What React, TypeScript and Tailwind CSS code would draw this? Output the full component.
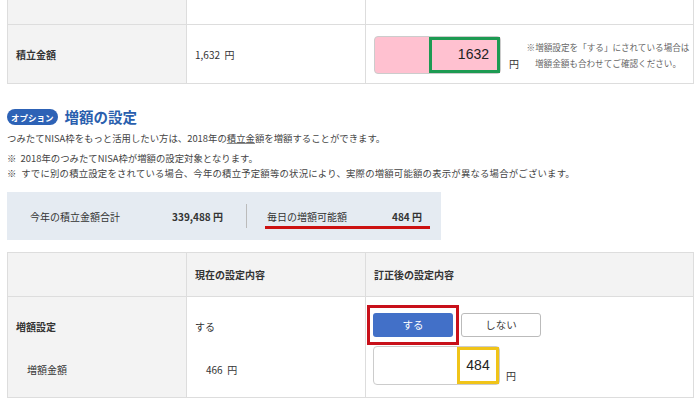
import React from "react"

const font = "font-['Noto_Sans_CJK_JP','Noto_Sans',sans-serif]"

function Cell({ className = "", children }: { className?: string; children?: React.ReactNode }) {
  return <div className={`flex items-center ${className}`}>{children}</div>
}

export default function App() {
  return (
    <div className={`w-[700px] h-[420px] overflow-hidden bg-white text-[#333] ${font}`}>
      <div className="ml-[7px] w-[687px]">
        {/* 上部テーブル（積立金額） */}
        <div className="grid grid-cols-[179px_179px_1fr] border-x border-b border-[#ddd] text-[10px]">
          <Cell className="h-[25px] bg-[#f3f3f3] border-r border-b border-[#ddd]" />
          <Cell className="h-[25px] border-r border-b border-[#ddd]" />
          <Cell className="h-[25px] border-b border-[#ddd]" />

          <Cell className="h-[58px] bg-[#f3f3f3] border-r border-[#ddd] pl-2 font-bold">積立金額</Cell>
          <Cell className="h-[58px] border-r border-[#ddd] pl-[8px]">1,632&nbsp;&nbsp;円</Cell>
          <Cell className="h-[58px] pl-2 pt-px">
            <div className="flex h-[38px] w-[127px] shrink-0 rounded-sm border border-[#ccc] bg-[#ffc1d0]">
              <div className="flex-1" />
              <div className="flex w-[71px] items-center justify-end border-[3px] border-[#1d9a52] pr-2 font-['Liberation_Sans',sans-serif] text-[14px] text-[#222]">
                1632
              </div>
            </div>
            <span className="ml-[8px] mt-[18px] shrink-0 text-[10px]">円</span>
            <div className="ml-[4px] w-[170px] shrink-0 whitespace-nowrap text-center text-[8.6px] leading-[16px] text-[#666]">
              ※増額設定を「する」にされている場合は
              <br />
              増額金額も合わせてご確認ください。
            </div>
          </Cell>
        </div>

        {/* オプション 見出し */}
        <div className="mt-[24px] flex items-center gap-[7px]">
          <span className="rounded-full bg-[#2d62b6] px-[4px] py-[1px] text-[8.5px] font-bold leading-[14px] text-white">オプション</span>
          <span className="text-[14.5px] font-bold leading-[18px] text-[#2a5fae]">増額の設定</span>
        </div>

        <div className="mt-[4px] text-[9.4px] leading-[16px] text-[#444]">
          <p>
            つみたてNISA枠をもっと活用したい方は、2018年の<span className="underline decoration-[#888]">積立金</span>額を増額することができます。
          </p>
          <p className="mt-[4px]">※&nbsp;&nbsp;2018年のつみたてNISA枠が増額の設定対象となります。</p>
          <p className="-mt-px tracking-[0.2px]">※&nbsp;&nbsp;すでに別の積立設定をされている場合、今年の積立予定額等の状況により、実際の増額可能額の表示が異なる場合がございます。</p>
        </div>

        {/* 合計ボックス */}
        <div className="mt-[11px] flex h-[48px] w-[434px] items-center bg-[#e5ebf2] text-[10px] text-[#333]">
          <span className="ml-[23px] w-[135px]">今年の積立金額合計</span>
          <span className="w-[58px] text-right font-bold">339,488 円</span>
          <span className="ml-[23px] h-[24px] w-px bg-[#bbb]" />
          <div className="ml-[18px] flex w-[165px] items-center border-b-[3px] border-[#cc1111] pb-[2px] pt-[5px]">
            <span className="ml-[2px]">毎日の増額可能額</span>
            <span className="ml-auto mr-[8px] font-bold">484 円</span>
          </div>
        </div>

        {/* 増額設定テーブル */}
        <div className="mt-[12px] grid grid-cols-[179px_179px_1fr] border border-[#ddd] text-[10px]">
          <Cell className="h-[44px] bg-[#f3f3f3] border-r border-b border-[#ddd]" />
          <Cell className="h-[44px] bg-[#f3f3f3] border-r border-b border-[#ddd] pl-[8px] font-bold">現在の設定内容</Cell>
          <Cell className="h-[44px] bg-[#f3f3f3] border-b border-[#ddd] pl-[8px] font-bold">訂正後の設定内容</Cell>

          <div className="h-[100px] bg-[#f3f3f3] border-r border-[#ddd]">
            <div className="flex h-[57px] items-center pl-2 pt-[2px] font-bold">増額設定</div>
            <div className="flex h-[30px] items-center pl-[19px]">増額金額</div>
          </div>
          <div className="h-[100px] border-r border-[#ddd]">
            <div className="flex h-[57px] items-center pl-[8px] pt-[2px]">する</div>
            <div className="flex h-[30px] items-center pl-[19px]">466&nbsp;&nbsp;円</div>
          </div>
          <div className="h-[100px] pl-[1px]">
            <div className="flex items-center pt-[8px]">
              <div className="border-[3px] border-[#c8101a] px-[3px] py-[5px]">
                <button className="flex h-[24px] w-[80px] items-center justify-center rounded-[3px] bg-[#4270c8] text-[10.5px] text-white">
                  する
                </button>
              </div>
              <button className="ml-[2px] flex h-[24px] w-[80px] items-center justify-center rounded-[3px] border border-[#bbb] bg-white text-[10.5px] text-[#444]">
                しない
              </button>
            </div>
            <div className="ml-[6px] mt-px flex items-end">
              <div className="flex h-[39px] w-[127px] rounded-sm border border-[#ccc] bg-white">
                <div className="flex-1" />
                <div className="flex w-[42px] items-center justify-center border-[3px] border-[#f0c419] font-['Liberation_Sans',sans-serif] text-[14px] text-[#222]">
                  484
                </div>
              </div>
              <span className="mb-[2px] ml-[6px] text-[10px]">円</span>
            </div>
          </div>
        </div>
      </div>
    </div>
  )
}
